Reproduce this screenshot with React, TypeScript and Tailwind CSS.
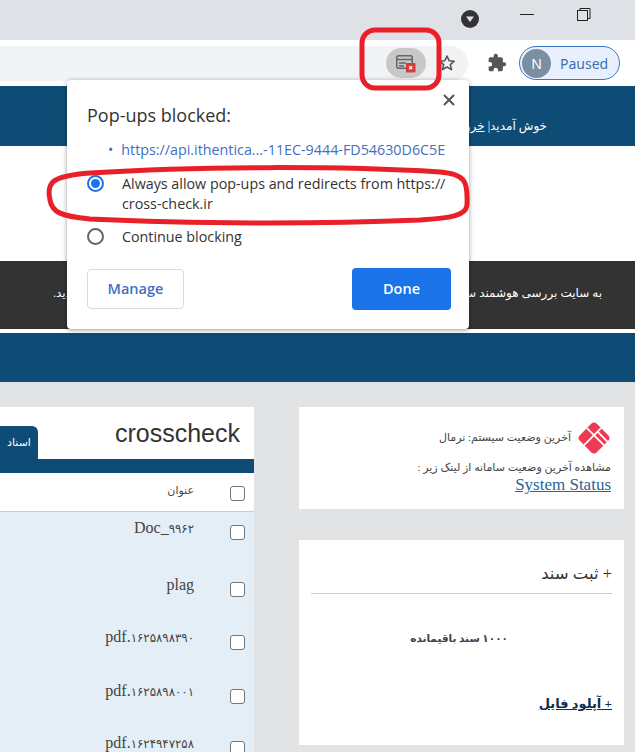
const serif = "font-['Liberation_Serif','DejaVu_Sans',serif]";

function Checkbox() {
  return <span className="block h-[15px] w-[15px] shrink-0 rounded-[3px] border border-[#767676] bg-white" />;
}

function Row({ prefix, digits, height, top, boxTop }: { prefix: string; digits?: string; height: string; top: string; boxTop: string }) {
  return (
    <div className={`flex justify-end gap-[36px] pr-[9px] ${height}`}>
      <span dir="ltr" className={`text-[16px] leading-[20px] text-[#444] ${top}`}>
        {prefix}
        {digits ? <span className="text-[11.8px]">{digits}</span> : null}
      </span>
      <span className={boxTop}><Checkbox /></span>
    </div>
  );
}

function WindowBar() {
  return (
    <div className="relative flex h-[40px] items-start justify-end bg-[#dee1e6]">
      <svg width="20" height="20" viewBox="0 0 20 20" className="mr-[40px] mt-[9px]">
        <circle cx="10" cy="10" r="9" fill="#333" />
        <path d="M6 7.5h8L10 13z" fill="#dee1e6" />
      </svg>
      <svg width="14" height="2" viewBox="0 0 14 2" className="mr-[43px] mt-[14px]"><path d="M0 .5h14" stroke="#222" strokeWidth="1" /></svg>
      <svg width="14" height="14" viewBox="0 0 14 14" className="mr-[44px] mt-[8px]" fill="none" stroke="#222" strokeWidth="1">
        <rect x="0.5" y="2.5" width="10" height="10" />
        <path d="M3 2.5V0.5h10v10h-2.5" />
      </svg>
    </div>
  );
}

function Toolbar() {
  return (
    <div className="flex h-[46px] items-center bg-white">
      <div className="flex h-[35px] w-[468px] items-center justify-end rounded-r-full bg-[#f1f3f4] pr-[12px]">
        <div className="mr-[12px] flex h-[30px] w-[40px] items-center justify-center rounded-full bg-[#c8c8c8]">
          <svg width="22" height="20" viewBox="0 0 22 20" className="mt-[2px]">
            <rect x="1.75" y="1.75" width="15.5" height="12.5" rx="1.5" fill="none" stroke="#666" strokeWidth="1.5" />
            <path d="M1.75 5.5h15.5M4 9h7M4 12h5" stroke="#666" strokeWidth="1.5" />
            <rect x="11" y="9" width="9.5" height="9.5" rx="1" fill="#d93a35" />
            <path d="M14.2 12.2l3 3m0-3l-3 3" stroke="#fff" strokeWidth="1.3" />
          </svg>
        </div>
        <svg width="18" height="18" viewBox="0 0 18 18"><path d="M9 2l2.1 4.7 5.1.5-3.9 3.4 1.2 5L9 13l-4.5 2.6 1.2-5-3.9-3.4 5.1-.5z" fill="none" stroke="#555" strokeWidth="1.6" strokeLinejoin="round" /></svg>
      </div>
      <svg width="20" height="20" viewBox="0 0 24 24" className="ml-[19px]" fill="#555">
        <path d="M20.5 11H19V7a2 2 0 0 0-2-2h-4V3.5a2.5 2.5 0 0 0-5 0V5H4a2 2 0 0 0-2 2v3.8h1.5a2.7 2.7 0 0 1 0 5.4H2V20a2 2 0 0 0 2 2h3.8v-1.5a2.7 2.7 0 0 1 5.4 0V22H17a2 2 0 0 0 2-2v-4h1.5a2.5 2.5 0 0 0 0-5z" />
      </svg>
      <div className="ml-[12px] flex h-[34px] w-[101px] items-center rounded-full border border-[#3b78c4] bg-[#e8f0fe] pl-[2px]">
        <span className="flex h-[29px] w-[29px] items-center justify-center rounded-full bg-[#7a8f9f] text-[14px] text-white">N</span>
        <span className="ml-[9px] text-[14px] text-[#3d6fb5]">Paused</span>
      </div>
    </div>
  );
}

function SystemCard() {
  return (
    <section className="flex h-[102px] w-[325px] flex-col bg-white pr-[13px] pt-[14px] text-right">
      <div className="flex h-[33px] items-center justify-start gap-[6px]" dir="rtl">
        <svg width="34" height="34" viewBox="0 0 34 34" className="shrink-0">
          <g transform="rotate(45 17 17)">
            <rect x="5" y="5" width="24" height="24" rx="4" fill="#ef3a55" />
            <path d="M15 5V29M5 15H29M15 10H29" stroke="#fff" strokeWidth="1.7" fill="none" />
          </g>
        </svg>
        <span className={`text-[11px] text-[#444] ${serif}`}>آخرین وضعیت سیستم: نرمال</span>
      </div>
      <p dir="rtl" className={`mt-[3px] text-[11px] leading-[20px] text-[#444] ${serif}`}>مشاهده آخرین وضعیت سامانه از لینک زیر :</p>
      <a className={`text-[17px] leading-[16px] text-[#2a6496] underline ${serif}`}>System Status</a>
    </section>
  );
}

function RegisterCard() {
  return (
    <section className="mt-[31px] flex h-[205px] w-[325px] flex-col bg-white pl-[12px] pr-[12px] pt-[24px]">
      <h3 dir="rtl" className={`border-b border-[#ccc] pb-[9px] text-[16.5px] leading-[20px] text-[#333] ${serif}`}>+ ثبت سند</h3>
      <p dir="rtl" className={`mt-[35px] pr-[104px] text-[10.5px] font-bold leading-[20px] text-[#444] ${serif}`}>۱۰۰۰ سند باقیمانده</p>
      <a dir="rtl" className={`mt-[44px] block text-[13px] font-bold leading-[22px] text-[#0f2f4f] underline ${serif}`}>+ آپلود فایل</a>
    </section>
  );
}

function DocsCard() {
  return (
    <section className="h-[345px] w-[254px] overflow-hidden bg-white">
      <div className="flex h-[52px] items-end justify-between">
        <div className={`flex h-[33px] w-[38px] items-center justify-center rounded-tr-[6px] bg-[#0f4c75] text-[11px] text-white ${serif}`}>اسناد</div>
        <h2 className="mb-[12px] mr-[14px] font-['Liberation_Sans',sans-serif] text-[25px] leading-[28px] text-[#333]">crosscheck</h2>
      </div>
      <div className="h-[14px] bg-[#0f4c75]" />
      <div className="flex h-[39px] justify-end gap-[36px] border-b border-[#ccc] pr-[9px]">
        <span className={`pt-[8px] text-[11px] leading-[18px] text-[#444] ${serif}`}>عنوان</span>
        <span className="pt-[13px]"><Checkbox /></span>
      </div>
      <div className={`bg-[#e3eef6] ${serif}`}>
        <Row prefix="Doc_" digits="۹۹۶۲" height="h-[56px]" top="pt-[6px]" boxTop="pt-[13px]" />
        <Row prefix="plag" height="h-[53px]" top="pt-[7px]" boxTop="pt-[14px]" />
        <Row prefix="pdf." digits="۱۶۲۵۸۹۸۳۹۰" height="h-[54px]" top="pt-[6px]" boxTop="pt-[14px]" />
        <Row prefix="pdf." digits="۱۶۲۵۸۹۸۰۰۱" height="h-[52px]" top="pt-[6px]" boxTop="pt-[14px]" />
        <Row prefix="pdf." digits="۱۶۲۴۹۴۷۲۵۸" height="h-[40px]" top="pt-[6px]" boxTop="pt-[14px]" />
      </div>
    </section>
  );
}

function Popup() {
  return (
    <div className="absolute left-[67px] top-[80px] h-[249px] w-[402px] rounded-[4px] bg-white pl-[20px] pr-[18px] font-['Open_Sans',sans-serif] shadow-[0_1px_5px_rgba(0,0,0,0.4)]">
      <svg width="12" height="12" viewBox="0 0 12 12" className="absolute right-[14px] top-[14px]"><path d="M1 1l10 10M11 1L1 11" stroke="#555" strokeWidth="2" /></svg>
      <h4 className="pt-[22px] text-[18px] leading-[26px] text-[#333]">Pop-ups blocked:</h4>
      <div className="mt-[12px] flex items-center pl-[21px] text-[14.3px] leading-[20px] text-[#3f6fc4]">
        <span className="mr-[8px] text-[14px]">•</span>
        <span className="whitespace-nowrap">https://api.ithentica...-11EC-9444-FD54630D6C5E</span>
      </div>
      <div className="mt-[14px] flex text-[14.3px] leading-[20px] text-[#333]">
        <span className="mr-[18px] mt-[1px] flex h-[17px] w-[17px] shrink-0 items-center justify-center rounded-full border-2 border-[#1a73e8]">
          <span className="h-[9px] w-[9px] rounded-full bg-[#1a73e8]" />
        </span>
        <span>Always allow pop-ups and redirects from https://<br />cross-check.ir</span>
      </div>
      <div className="mt-[13px] flex text-[14.3px] leading-[20px] text-[#333]">
        <span className="mr-[18px] mt-[1px] h-[17px] w-[17px] shrink-0 rounded-full border-2 border-[#666]" />
        <span>Continue blocking</span>
      </div>
      <div className="mt-[21px] flex items-center justify-between">
        <button className="h-[40px] w-[97px] rounded-[4px] border border-[#dadce0] bg-white text-[14.5px] font-semibold text-[#3f6fc4]">Manage</button>
        <button className="h-[42px] w-[99px] rounded-[4px] bg-[#1a73e8] text-[14.5px] font-semibold text-white">Done</button>
      </div>
    </div>
  );
}

export default function App() {
  return (
    <div className="relative h-[752px] w-[635px] overflow-hidden bg-[#e1e3e5]">
      <WindowBar />
      <Toolbar />
      <div className={`flex h-[60px] items-center justify-end bg-[#0f4c75] pr-[88px] pt-[20px] text-[12px] text-white ${serif}`}>
        <span dir="rtl">خوش آمدید| <u>خروج</u></span>
      </div>
      <div className="h-[115px] bg-white" />
      <div dir="rtl" className={`flex h-[68px] items-center justify-between whitespace-nowrap bg-[#333] pb-[5px] pl-[53px] pr-[33px] text-[12px] text-white ${serif}`}>
        <span>به سایت بررسی هوشمند سرقت علمی</span>
        <span>کراس چک خوش آمدید.</span>
      </div>
      <div className="h-[4px] bg-white" />
      <div className="h-[49px] bg-[#0f4c75]" />
      <main className="flex justify-between pl-0 pr-[11px] pt-[25px]">
        <DocsCard />
        <div>
          <SystemCard />
          <RegisterCard />
        </div>
      </main>
      <Popup />
      <svg width="635" height="240" viewBox="0 0 635 240" className="pointer-events-none absolute left-0 top-0" fill="none" stroke="#e8202a" strokeWidth="5">
        <rect x="362" y="30" width="77" height="58" rx="13" />
        <path d="M50 200 C46 182 52 176 90 173 C200 166 340 166 440 172 C466 174 468 182 467 205 C466 216 450 218 420 220 C320 224 190 224 90 219 C60 216 52 212 50 200 Z" />
      </svg>
    </div>
  );
}
